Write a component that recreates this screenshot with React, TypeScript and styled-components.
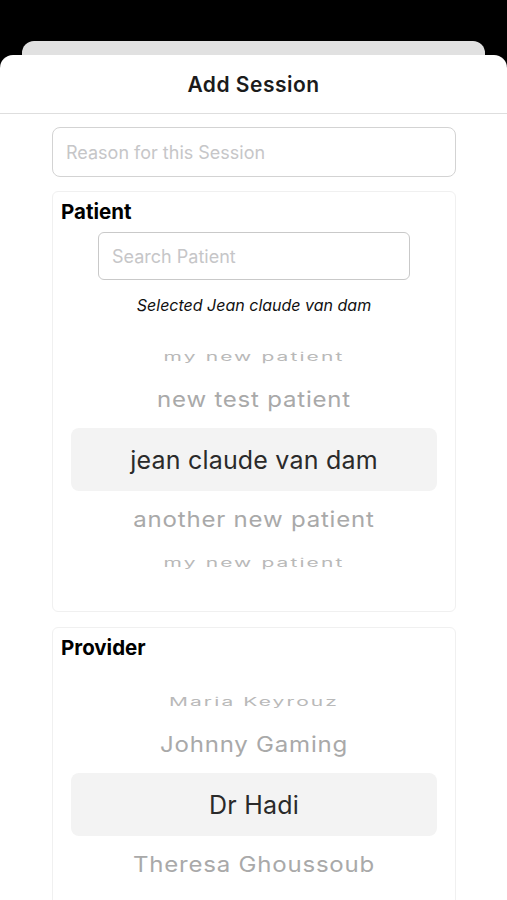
import styled, { createGlobalStyle } from 'styled-components';

type TPos = 'outer' | 'inner' | 'center';

const patients: { name: string; pos: TPos }[] = [
  { name: 'my new patient', pos: 'outer' },
  { name: 'new test patient', pos: 'inner' },
  { name: 'jean claude van dam', pos: 'center' },
  { name: 'another new patient', pos: 'inner' },
  { name: 'my new patient', pos: 'outer' },
];

const providers: { name: string; pos: TPos }[] = [
  { name: 'Maria Keyrouz', pos: 'outer' },
  { name: 'Johnny Gaming', pos: 'inner' },
  { name: 'Dr Hadi', pos: 'center' },
  { name: 'Theresa Ghoussoub', pos: 'inner' },
];

const Wheel = ({ items }: { items: { name: string; pos: TPos }[] }) => (
  <WheelBox>
    {items.map((item, i) => (
      <WheelRow key={i} $pos={item.pos}>
        <WheelText $pos={item.pos}>{item.name}</WheelText>
      </WheelRow>
    ))}
  </WheelBox>
);

const App = () => {
  return (
    <Screen>
      <GlobalStyle />
      <BackCard />
      <Sheet>
        <SheetHeader>
          <Title>Add Session</Title>
        </SheetHeader>

        <Body>
          <ReasonInput placeholder="Reason for this Session" />

          <Card>
            <CardTitle>Patient</CardTitle>
            <SearchInput placeholder="Search Patient" />
            <Selected>Selected Jean claude van dam</Selected>
            <Wheel items={patients} />
          </Card>

          <Card>
            <CardTitle>Provider</CardTitle>
            <Wheel items={providers} />
          </Card>
        </Body>
      </Sheet>
    </Screen>
  );
};

export default App;

const GlobalStyle = createGlobalStyle`
  html, body {
    margin: 0;
    padding: 0;
    background: #000;
  }

  body {
    font-family: Inter, "Noto Sans", "Liberation Sans", sans-serif;
    -webkit-font-smoothing: antialiased;
  }

  * {
    box-sizing: border-box;
  }
`;

const Screen = styled.div`
  height: 900px;
  overflow: hidden;
  background: #000;
  display: flex;
  flex-direction: column;
`;

const BackCard = styled.div`
  margin: 41px 22px 0;
  height: 14px;
  flex-shrink: 0;
  background: #e1e1e1;
  border-radius: 12px 12px 0 0;
`;

const Sheet = styled.div`
  flex: 1;
  background: #fff;
  border-radius: 13px 13px 0 0;
  display: flex;
  flex-direction: column;
`;

const SheetHeader = styled.header`
  height: 59px;
  display: flex;
  align-items: center;
  justify-content: center;
  border-bottom: 1px solid #dedede;
`;

const Title = styled.h1`
  margin: 0;
  font-size: 21px;
  font-weight: 600;
  color: #1b1b1b;
  letter-spacing: 0.5px;
`;

const Body = styled.div`
  padding: 13px 51px 0 52px;
  display: flex;
  flex-direction: column;
`;

const ReasonInput = styled.input`
  height: 50px;
  width: 100%;
  border: 1.5px solid #d3d3d3;
  border-radius: 8px;
  padding: 0 13px;
  font-family: inherit;
  font-size: 18px;
  color: #222;
  outline: none;

  &::placeholder {
    color: #c6c6c8;
  }
`;

const Card = styled.section`
  margin-top: 14px;
  border: 1px solid #f0f0f0;
  border-radius: 6px;
  padding: 8px 8px 34px;
  display: flex;
  flex-direction: column;
  align-items: stretch;

  & + & {
    margin-top: 15px;
  }
`;

const CardTitle = styled.h2`
  margin: 0;
  font-size: 20.5px;
  line-height: 24px;
  font-weight: 700;
  color: #000;
`;

const SearchInput = styled.input`
  align-self: center;
  margin-top: 8px;
  width: 312px;
  height: 48px;
  border: 1px solid #c9c9c9;
  border-radius: 6px;
  padding: 0 13px;
  font-family: inherit;
  font-size: 18px;
  outline: none;

  &::placeholder {
    color: #c6c6c8;
  }
`;

const Selected = styled.p`
  margin: 15px 0 0;
  text-align: center;
  font-size: 16px;
  line-height: 20px;
  font-style: italic;
  color: #111;
`;

const WheelBox = styled.div`
  margin-top: 27px;
  padding: 0 10px;
  display: flex;
  flex-direction: column;
`;

const rowHeight = { outer: 29, inner: 57, center: 63 };

const WheelRow = styled.div<{ $pos: TPos }>`
  height: ${(p) => rowHeight[p.$pos]}px;
  display: flex;
  align-items: center;
  justify-content: center;
  border-radius: 8px;
  background: ${(p) => (p.$pos === 'center' ? '#f3f3f3' : 'transparent')};
`;

const WheelText = styled.span<{ $pos: TPos }>`
  white-space: nowrap;
  font-size: ${(p) => (p.$pos === 'center' ? 25 : p.$pos === 'inner' ? 24 : 21)}px;
  letter-spacing: ${(p) =>
    p.$pos === 'outer' ? '2.1px' : p.$pos === 'inner' ? '0.8px' : '0.2px'};
  color: ${(p) =>
    p.$pos === 'center' ? '#2a2a2a' : p.$pos === 'inner' ? '#a9a9a9' : '#b9b9b9'};
  transform: scaleY(${(p) => (p.$pos === 'outer' ? 0.55 : p.$pos === 'inner' ? 0.9 : 1)});
`;
